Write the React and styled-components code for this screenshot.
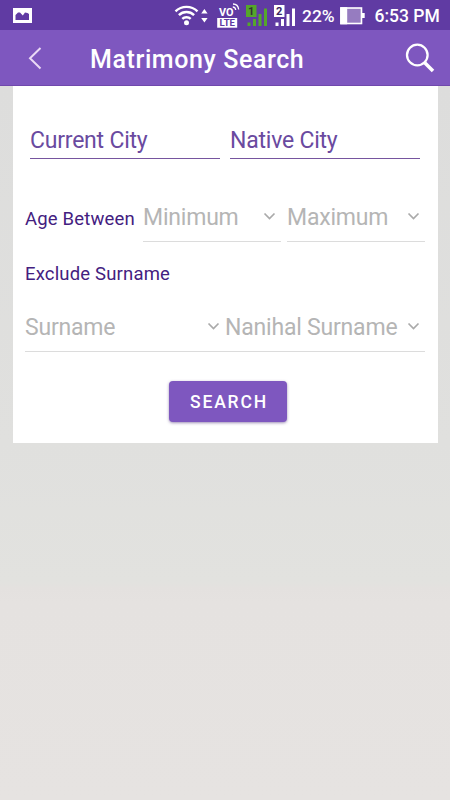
import React, { useState } from 'react';
import styled, { createGlobalStyle } from 'styled-components';

const GlobalStyle = createGlobalStyle`
    * {
        box-sizing: border-box;
    }

    body {
        margin: 0;
        font-family: Roboto, sans-serif;
    }
`;

const Screen = styled.div`
    display: flex;
    flex-direction: column;
    height: 800px;
    overflow: hidden;
    background: linear-gradient(#dddddc 86px, #e0e0de 442px, #e2e2df 582px, #e4e1df 588px, #e5e2e0 602px, #e6e3e1 800px);
`;

const StatusBar = styled.div`
    display: flex;
    align-items: center;
    height: 30px;
    padding: 0 10px 0 12px;
    background-color: #603ba3;
    color: white;
`;

const StatusIcon = styled.svg`
    flex: none;
    height: 30px;
    margin-left: ${props => props.$gap || 0}px;
`;

const Spacer = styled.div`
    flex: 1;
`;

const StatusText = styled.span`
    font-size: ${props => props.$size}px;
    font-weight: 500;
    line-height: 30px;
    width: ${props => props.$width}px;
    margin-left: ${props => props.$gap}px;
    padding-top: 2px;
    white-space: nowrap;
`;

const Toolbar = styled.header`
    display: flex;
    align-items: center;
    height: 56px;
    padding: 0 15px 0 27px;
    background-color: #7e57bf;
    border-bottom: 1px solid #7048ac;
`;

const IconButton = styled.button`
    display: flex;
    padding: 0;
    border: none;
    background: none;
`;

const Title = styled.h1`
    flex: 1;
    margin: 4px 0 0 47px;
    color: white;
    font-size: 25px;
    font-weight: 500;
    letter-spacing: 0.6px;
    line-height: 32px;
`;

const Card = styled.form`
    width: 425px;
    height: 356.5px;
    margin-left: 12.5px;
    padding: 34px 12.5px 0;
    background-color: white;
`;

const CityRow = styled.div`
    display: flex;
    gap: 10px;
    padding: 0 5px;
`;

const CityInput = styled.input`
    width: 190px;
    height: 39px;
    padding: 2px 0 0;
    border: none;
    border-bottom: 1px solid #76559f;
    border-radius: 0;
    outline: none;
    background: none;
    color: #6a4a9f;
    font-family: inherit;
    font-size: 23px;
    letter-spacing: -0.22px;

    &::placeholder {
        color: #6a4a9f;
        opacity: 1;
    }
`;

const AgeRow = styled.div`
    display: flex;
    gap: 6px;
    margin-top: 34px;
`;

const Label = styled.div`
    width: ${props => props.$width || 'auto'};
    margin-top: ${props => props.$top || '0'};
    color: #43207f;
    font-size: 18.5px;
    letter-spacing: 0.17px;
    line-height: 24px;
    white-space: nowrap;
`;

const SurnameRow = styled.div`
    display: flex;
    margin-top: 17px;
`;

const Select = styled.div`
    display: flex;
    justify-content: space-between;
    width: ${props => props.$width}px;
    height: 49px;
    padding: 11px 5px 0 0;
    border-bottom: 1px solid #dcdcdc;
    color: #b5b5b5;
    font-size: 23px;
    letter-spacing: -0.2px;
    line-height: 28px;
    white-space: nowrap;
`;

const Chevron = styled.svg`
    flex: none;
    width: 13px;
    height: 9px;
    margin-top: 8px;
`;

const SearchButton = styled.button`
    display: block;
    width: 118px;
    height: 41px;
    margin: 29px auto 0 144px;
    padding: 1px 0 0 2px;
    border: none;
    border-radius: 4px;
    background-color: #7e57bf;
    box-shadow: 0 1px 3px rgba(60, 30, 110, 0.5);
    color: white;
    font-family: inherit;
    font-size: 17.5px;
    font-weight: 500;
    letter-spacing: 1.85px;
`;

const Dropdown = ({ label, width }) => (
    <Select $width={width} role="combobox">
        <span>{label}</span>
        <Chevron viewBox="0 0 13 9">
            <path d="M1.5 1.5L6.5 6.5L11.5 1.5" fill="none" stroke="#aaa" strokeWidth="1.7" />
        </Chevron>
    </Select>
);

const SimSignal = ({ number, color, textColor, gap }) => (
    <StatusIcon $gap={gap} width="22" viewBox="0 0 22 30" fill={color}>
        <rect x="0" y="5" width="10.5" height="12" />
        <text x="5.2" y="15" textAnchor="middle" fill={textColor} fontSize="11" fontWeight="700">{number}</text>
        <rect x="1.5" y="22.5" width="3" height="3.5" />
        <rect x="7" y="19" width="3" height="7" />
        <rect x="12.5" y="14" width="3" height="12" />
        <rect x="18" y="8.5" width="3" height="17.5" />
    </StatusIcon>
);

const Status = () => (
    <StatusBar>
        <StatusIcon width="20" viewBox="0 0 20 30">
            <path
                d="M1 8H20V23H1Z M3.5 20H17V14L15.5 13L13 12.5L10.8 15.5L8 12.5L6 12.5L3.5 15Z"
                fill="white"
                fillRule="evenodd"
            />
        </StatusIcon>
        <Spacer />
        <StatusIcon width="34" viewBox="0 0 34 30">
            <g fill="none" stroke="white" strokeWidth="2.4">
                <path d="M1.5 11.3A15.8 15.8 0 0 1 23.5 11.3" />
                <path d="M4.9 15.2A10.8 10.8 0 0 1 20.1 15.2" />
                <path d="M8.3 18.9A6 6 0 0 1 16.7 18.9" />
            </g>
            <circle cx="12.5" cy="22.8" r="2.5" fill="white" />
            <path d="M27.2 13.5L30.4 9L33.6 13.5Z M27.2 18L30.4 22.5L33.6 18Z" fill="white" />
        </StatusIcon>
        <StatusIcon $gap={9} width="23" viewBox="0 0 23 30">
            <text x="2" y="16" fill="white" fontSize="11" fontWeight="700" textLength="14.5" lengthAdjust="spacingAndGlyphs">VO</text>
            <rect x="0.2" y="18" width="20" height="9.7" fill="white" />
            <text x="2.5" y="26.2" fill="#603ba3" fontSize="8.5" fontWeight="700" textLength="15.5" lengthAdjust="spacingAndGlyphs">LTE</text>
            <g fill="none" stroke="white" strokeWidth="1.3">
                <path d="M16 4Q21 4 21.7 9.5" />
                <path d="M15.8 7Q18.3 7 18.7 10" />
            </g>
        </StatusIcon>
        <SimSignal gap={5.5} number="1" color="#55a62b" textColor="#333" />
        <SimSignal gap={6} number="2" color="white" textColor="#3b2762" />
        <StatusText $gap={6.5} $width={33} $size={17.4}>22%</StatusText>
        <StatusIcon $gap={5} width="25" viewBox="0 0 25 30">
            <rect x="1" y="8" width="20.5" height="15.5" fill="#967cc0" stroke="white" strokeWidth="1.6" />
            <rect x="0.2" y="7.2" width="7" height="17.1" fill="white" />
            <rect x="22" y="13" width="2.7" height="5" fill="white" />
        </StatusIcon>
        <StatusText $gap={9.5} $width={65.5} $size={17.5}>6:53 PM</StatusText>
    </StatusBar>
);

const App = () => {
    const [currentCity, setCurrentCity] = useState('');
    const [nativeCity, setNativeCity] = useState('');

    return (
        <Screen>
            <GlobalStyle />
            <Status />
            <Toolbar>
                <IconButton aria-label="Back">
                    <svg width="16" height="24" viewBox="0 0 16 24">
                        <path d="M13.5 2L3 12.3L13.5 22.5" fill="none" stroke="#ead9f5" strokeWidth="2" />
                    </svg>
                </IconButton>
                <Title>Matrimony Search</Title>
                <IconButton aria-label="Search">
                    <svg width="30" height="30" viewBox="0 0 30 30">
                        <circle cx="12.3" cy="12" r="10.3" fill="none" stroke="white" strokeWidth="2.3" />
                        <path d="M19.5 19.5L28 28" stroke="white" strokeWidth="3.6" />
                    </svg>
                </IconButton>
            </Toolbar>

            <Card onSubmit={(e) => e.preventDefault()}>
                <CityRow>
                    <CityInput
                        placeholder="Current City"
                        value={currentCity}
                        onChange={(e) => setCurrentCity(e.target.value)}
                    />
                    <CityInput
                        placeholder="Native City"
                        value={nativeCity}
                        onChange={(e) => setNativeCity(e.target.value)}
                    />
                </CityRow>
                <AgeRow>
                    <Label $width="112px" $top="14px">Age Between</Label>
                    <Dropdown label="Minimum" width={138} />
                    <Dropdown label="Maximum" width={138} />
                </AgeRow>
                <Label $top="20px">Exclude Surname</Label>
                <SurnameRow>
                    <Dropdown label="Surname" width={200} />
                    <Dropdown label="Nanihal Surname" width={200} />
                </SurnameRow>
                <SearchButton type="submit">SEARCH</SearchButton>
            </Card>
        </Screen>
    );
};

export default App;
